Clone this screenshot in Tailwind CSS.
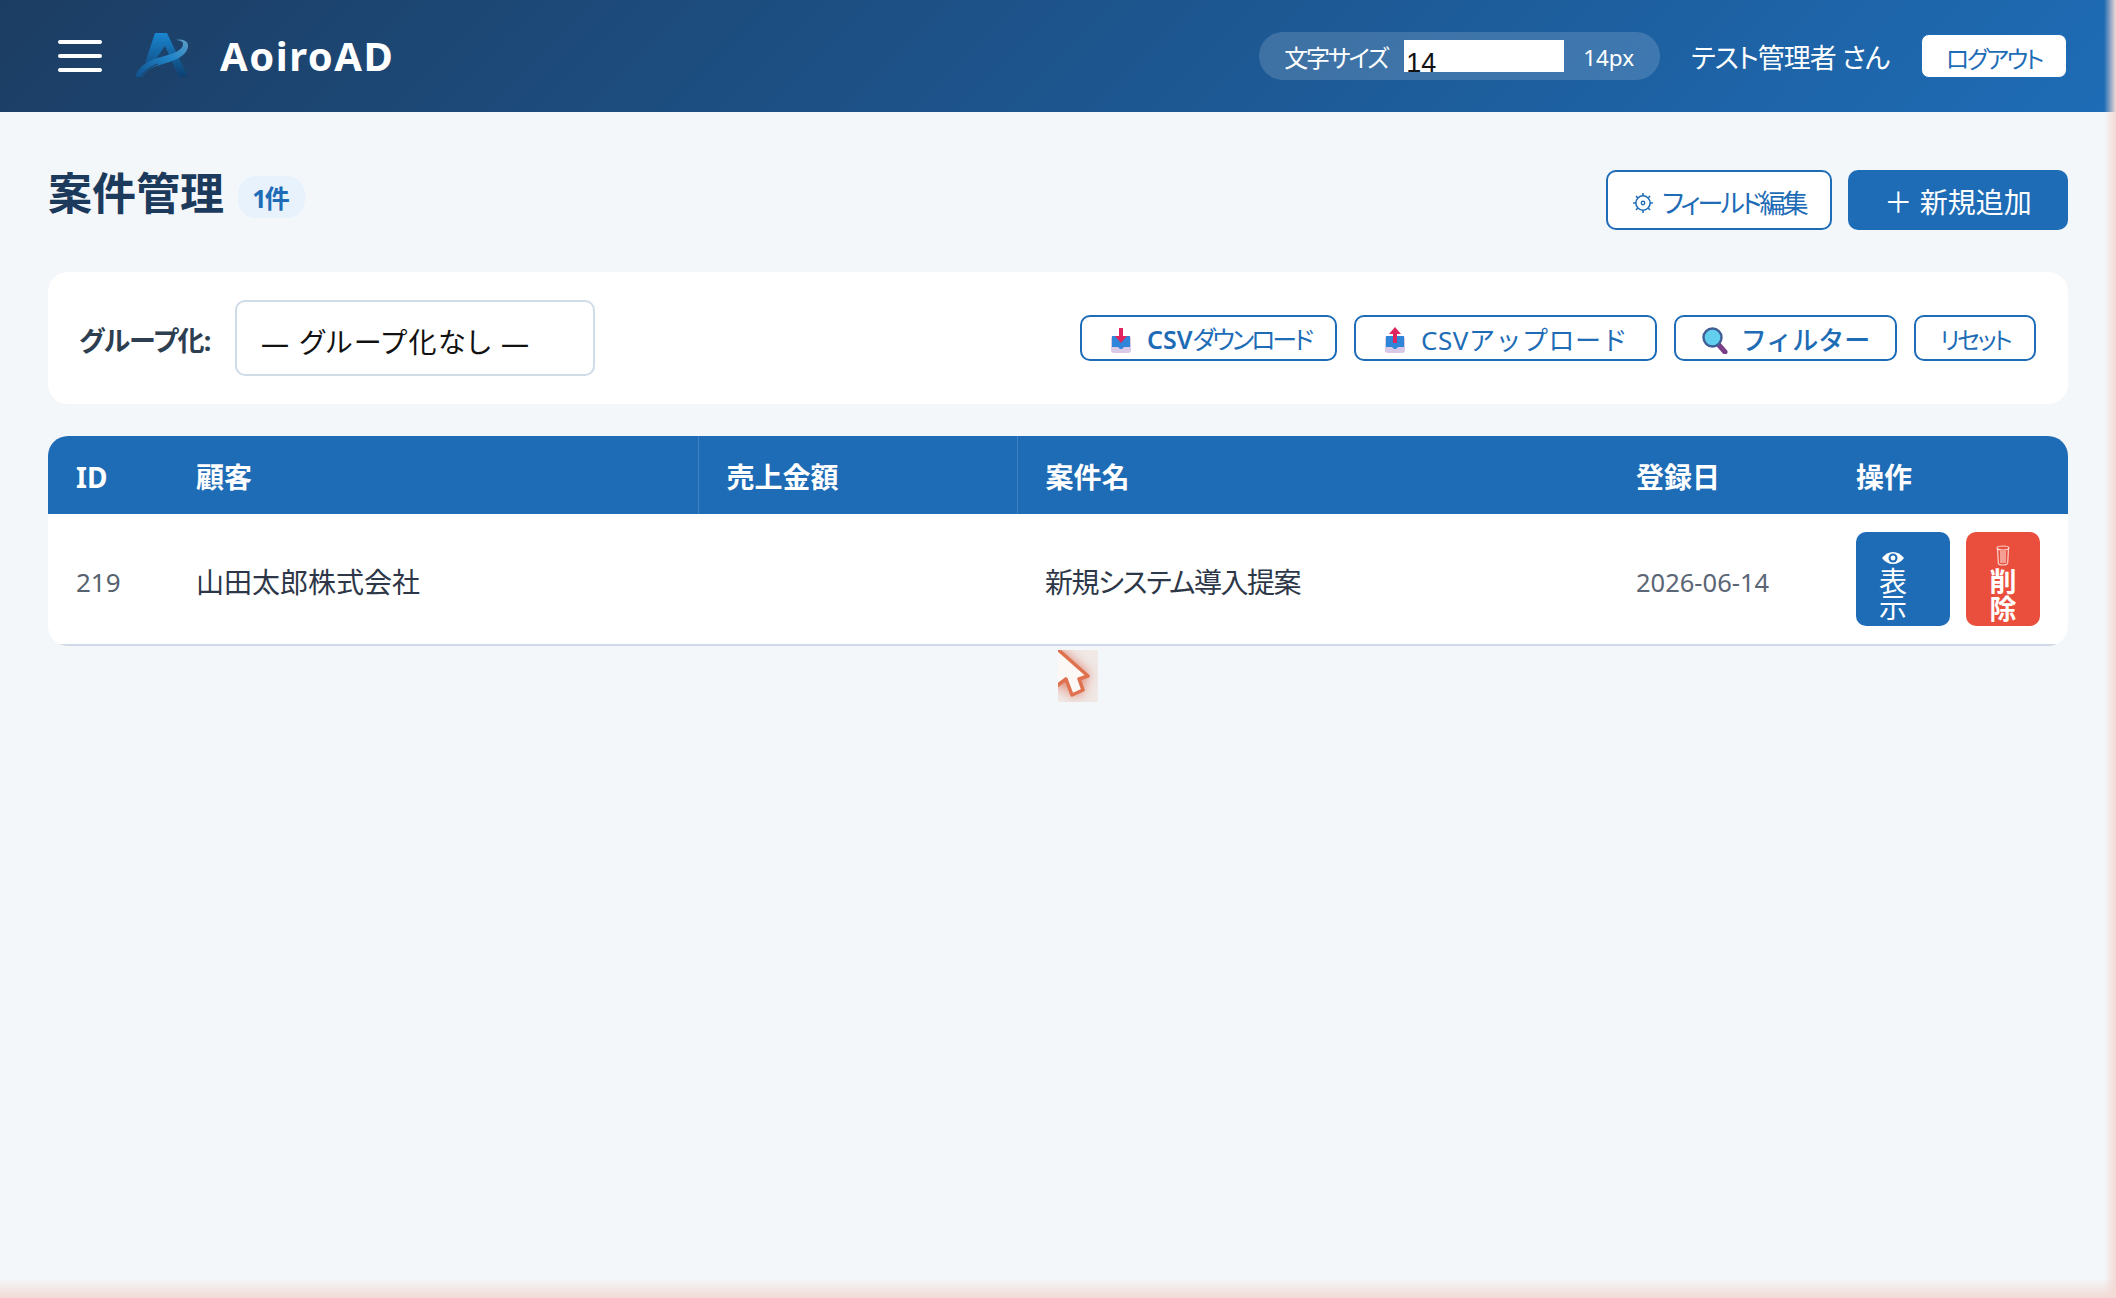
<!DOCTYPE html>
<html lang="ja">
<head>
<meta charset="utf-8">
<title>AoiroAD</title>
<script src="https://cdn.jsdelivr.net/npm/@tailwindcss/browser@4"></script>
</head>
<body class="relative h-[1298px] w-[2116px] overflow-hidden bg-[#f4f7fa] font-['Noto_Sans','Noto_Sans_CJK_JP',sans-serif] [font-feature-settings:'palt']">
<header class="flex h-[112px] items-center justify-between bg-[linear-gradient(135deg,#1c3d63,#1e6cb6)] pl-[58px] pr-[49px]">
  <div class="flex items-center">
    <div class="flex w-[44px] flex-col gap-[10px]">
      <span class="h-[4px] rounded-full bg-white"></span>
      <span class="h-[4px] rounded-full bg-white"></span>
      <span class="h-[4px] rounded-full bg-white"></span>
    </div>
    <svg class="ml-[33px] h-[46px] w-[56px]" viewBox="0 0 56 46" fill="none">
      <defs>
        <linearGradient id="lg1" x1="0" y1="0" x2="0" y2="1"><stop offset="0" stop-color="#1a86d0"/><stop offset="1" stop-color="#0e3f70"/></linearGradient>
        <linearGradient id="lg2" x1="0" y1="1" x2="1" y2="0"><stop offset="0" stop-color="#0f4f8a"/><stop offset=".6" stop-color="#2185c8"/><stop offset="1" stop-color="#5f9cc4"/></linearGradient>
      </defs>
      <path d="M20 0h12l21 44h-9L30 13 21 26l-11 4z" fill="url(#lg1)"/>
      <path d="M0 44C4 32 14 27 26 24 38 21 48 17 48 11 48 8 44 7 40 7 48 5 54 8 53 14 51 24 38 28 28 31 18 34 10 37 8 44z" fill="url(#lg2)"/>
      <path d="M6 44c3-6 9-10 17-13M12 44c3-4 7-7 13-9" stroke="#1d3d63" stroke-width="1"/>
    </svg>
    <span class="ml-[29px] text-[40px] font-bold leading-none tracking-[1.5px] text-white">AoiroAD</span>
  </div>
  <div class="flex items-center">
    <div class="flex h-[48px] w-[401px] items-center rounded-full bg-white/15 pl-[25px] text-[24px] text-white">
      <span class="w-[105px] whitespace-nowrap pt-[3px] tracking-[-2px]">文字サイズ</span>
      <input class="ml-[15px] h-[32px] w-[160px] bg-white pl-[2px] pt-[13px] font-['Liberation_Sans',sans-serif] text-[27px] leading-[32px] text-[#111]" value="14">
      <span class="ml-[19px] pt-[4px] text-[22.500px]">14px</span>
    </div>
    <span class="ml-[31px] whitespace-nowrap pt-[5px] text-[27px] tracking-[-1px] text-white">テスト管理者 さん</span>
    <button class="ml-[32px] h-[44px] w-[146px] rounded-[8px] border border-[#1e6cb6] bg-white pt-[5px] text-[24px] tracking-[-2.300px] text-[#1e6cb6]">ログアウト</button>
  </div>
</header>

<main class="px-[48px] pt-[58px]">
  <div class="flex h-[60px] items-center justify-between">
    <div class="flex items-center pb-[14px]">
      <h1 class="text-[44px] font-bold leading-none text-[#1c3a5c]">案件管理</h1>
      <span class="ml-[14px] mt-[7px] flex h-[42px] w-[67px] items-center justify-center rounded-[18px] bg-[#e8f2fc] pr-[3px] pt-[5px] text-[25px] font-bold tracking-[-2px] text-[#1e6cb6]">1件</span>
    </div>
    <div class="flex gap-[16px]">
      <button class="flex h-[60px] w-[226px] items-center justify-center gap-[8px] rounded-[10px] border-[2px] border-[#1e6cb6] bg-white pt-[6px] text-[26px] tracking-[-2.900px] text-[#1e6cb6]">
        <svg class="h-[22px] w-[22px]" viewBox="0 0 20 20" fill="none" stroke="#1e6cb6"><circle cx="10" cy="10" r="6.500" stroke-width="1.400"/><circle cx="10" cy="10" r="1.600" stroke-width="1.200"/><path d="M10 1v2.500M10 16.500V19M1 10h2.500M16.500 10H19M3.600 3.600l1.800 1.800M14.600 14.600l1.800 1.800M3.600 16.400l1.800-1.800M14.600 5.400l1.800-1.800" stroke-width="1.400"/></svg>
        フィールド編集
      </button>
      <button class="flex h-[60px] w-[220px] items-center justify-center rounded-[10px] bg-[#1e6cb6] pt-[3px] text-[28px] text-white">＋ 新規追加</button>
    </div>
  </div>

  <section class="mt-[42px] flex h-[132px] items-center justify-between rounded-[20px] bg-white pl-[31px] pr-[32px]">
    <div class="flex items-center">
      <label class="w-[156px] whitespace-nowrap pt-[7px] text-[27px] font-bold tracking-[-0.700px] text-[#2c3e50]">グループ化:</label>
      <select class="h-[76px] w-[360px] appearance-none rounded-[10px] border-[2px] border-[#d0dbe8] bg-white pl-[24px] pt-[8px] text-[28px] tracking-[1.500px] text-[#111]"><option>— グループ化なし —</option></select>
    </div>
    <div class="flex items-center gap-[17px]">
      <button class="flex h-[46px] w-[257px] items-center justify-center gap-[14px] rounded-[10px] border-[2px] border-[#1e6cb6] bg-white pl-[3px] pt-[4px] text-[25px] text-[#1e6cb6]">
        <svg class="h-[27px] w-[24px]" viewBox="0 0 24 27"><rect x="2" y="9" width="20" height="17" rx="3" fill="#d9c9e6"/><path d="M3 9h18v11h-6l-2 2h-2l-2-2H3z" fill="#2f86d9"/><path d="M10 1h4v8h4l-6 7-6-7h4z" fill="#e0245e"/></svg>
        <span class="whitespace-nowrap"><b class="font-semibold">CSV</b><span class="tracking-[-3px]">ダウンロード</span></span>
      </button>
      <button class="flex h-[46px] w-[303px] items-center justify-center gap-[14px] rounded-[10px] border-[2px] border-[#1e6cb6] bg-white pt-[4px] text-[26px] text-[#1e6cb6] [font-feature-settings:normal]">
        <svg class="h-[27px] w-[24px]" viewBox="0 0 24 27"><rect x="2" y="9" width="20" height="17" rx="3" fill="#d9c9e6"/><path d="M3 9h18v11h-6l-2 2h-2l-2-2H3z" fill="#2f86d9"/><path d="M12 0l6 7h-4v9h-4V7H6z" fill="#e0245e"/></svg>
        <span class="whitespace-nowrap tracking-[0.500px]">CSVアップロード</span>
      </button>
      <button class="flex h-[46px] w-[223px] items-center justify-center gap-[12px] rounded-[10px] border-[2px] border-[#1e6cb6] bg-white pt-[4px] text-[26px] font-medium text-[#1e6cb6] [font-feature-settings:normal]">
        <svg class="h-[28px] w-[28px]" viewBox="0 0 28 28" fill="none"><path d="M17 18l7 8" stroke="#7a3f86" stroke-width="5" stroke-linecap="round"/><circle cx="11.500" cy="11.500" r="9" fill="#62cfee" stroke="#3f5f96" stroke-width="2.400"/></svg>
        <span class="whitespace-nowrap">フィルター</span>
      </button>
      <button class="h-[46px] w-[122px] rounded-[10px] border-[2px] border-[#1e6cb6] bg-white pt-[4px] text-[24px] tracking-[-2.500px] text-[#1e6cb6]">リセット</button>
    </div>
  </section>

  <section class="mt-[32px] overflow-hidden rounded-[20px]">
    <table class="w-[2020px] table-fixed border-collapse bg-white">
      <colgroup><col class="w-[120px]"><col class="w-[530px]"><col class="w-[319px]"><col class="w-[591px]"><col class="w-[220px]"><col class="w-[240px]"></colgroup>
      <thead class="bg-[#1e6cb6] text-left text-[28px] font-bold text-white">
        <tr class="h-[78px]">
          <th class="pl-[28px] pt-[4px] font-bold">ID</th>
          <th class="border-r border-white/15 pl-[28px] pt-[4px] font-bold">顧客</th>
          <th class="border-r border-white/15 pl-[28px] pt-[4px] font-bold">売上金額</th>
          <th class="pl-[28px] pt-[4px] font-bold">案件名</th>
          <th class="pl-[28px] pt-[4px] font-bold">登録日</th>
          <th class="pl-[28px] pt-[4px] font-bold">操作</th>
        </tr>
      </thead>
      <tbody>
        <tr class="h-[131px] border-b-[2px] border-[#d0dae6]">
          <td class="pl-[28px] pt-[6px] text-[26px] text-[#56636f]">219</td>
          <td class="pl-[28px] pt-[6px] text-[28px] text-[#2d3748]">山田太郎株式会社</td>
          <td></td>
          <td class="pl-[28px] pt-[6px] text-[28px] text-[#2d3748]"><span class="tracking-[-1.5px]">新規システム導入提案</span></td>
          <td class="pl-[28px] pt-[7px] text-[25.500px] text-[#5a6675]">2026-06-14</td>
          <td class="pl-[28px]">
            <div class="flex gap-[16px]">
              <button class="flex h-[94px] w-[94px] flex-col items-center rounded-[10px] bg-[#1e6cb6] pr-[20px] pt-[19px] text-[28px] leading-[26px] text-white">
                <svg class="mb-[3px] h-[14px] w-[24px] shrink-0" viewBox="0 0 24 14" fill="none"><path d="M1 7c3-4 7-6 11-6s8 2 11 6c-3 4-7 6-11 6S4 11 1 7z" fill="#fff"/><circle cx="12" cy="7" r="4.500" fill="#1e6cb6"/><circle cx="12" cy="7" r="2.400" fill="#fff"/></svg>
                <span>表</span><span>示</span>
              </button>
              <button class="flex h-[94px] w-[74px] flex-col items-center rounded-[10px] bg-[#ea4f3d] pt-[13px] text-[27px] font-semibold leading-[27px] text-white">
                <svg class="mb-[2px] h-[21px] w-[14px] shrink-0" viewBox="0 0 14 21" fill="none" stroke="#fbd5d0" stroke-width="1.200"><ellipse cx="7" cy="3" rx="6" ry="2"/><path d="M1.500 3l.8 15c0 1 2 2 4.700 2s4.700-1 4.700-2l.8-15M5 6v12M9 6v12M7 6v12"/></svg>
                <span>削</span><span>除</span>
              </button>
            </div>
          </td>
        </tr>
      </tbody>
    </table>
  </section>
</main>

<!-- drag-cursor artefact lying over the page -->
<div class="absolute left-[1058px] top-[650px] h-[52px] w-[40px] overflow-hidden bg-[#f0e9e6]">
  <svg class="h-[52px] w-[40px] overflow-visible drop-shadow-[0_0_6px_#dd7f6a]" viewBox="0 0 40 52"><path d="M-4-4L30 26 21 29 25 40 14 45 8 29-4 38z" fill="#fbf8f5" stroke="#e0714e" stroke-width="3.500" stroke-linejoin="round"/></svg>
</div>

<!-- soft edge glow over the window -->
<div class="pointer-events-none absolute inset-x-0 bottom-0 h-[20px] bg-gradient-to-t from-[#f2d9d4] to-transparent"></div>
<div class="pointer-events-none absolute inset-y-0 right-0 w-[12px] bg-gradient-to-l from-[#f2d9d4] to-transparent"></div>
</body>
</html>
